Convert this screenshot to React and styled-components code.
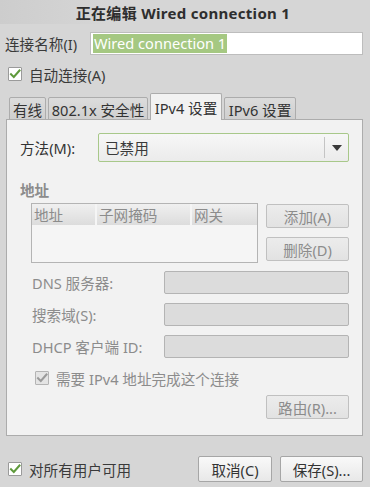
import React from "react";
import styled, { createGlobalStyle } from "styled-components";

const Global = createGlobalStyle`
  html, body { margin: 0; padding: 0; background: #d6d6d6; }
  body {
    font-family: "Noto Sans", "Noto Sans CJK SC", sans-serif;
    font-size: 14.6px;
    color: #3a3a3a;
  }
  * { box-sizing: border-box; }
`;

const Window = styled.div`
  width: 370px;
  height: 487px;
  background: #d6d6d6;
  display: flex;
  flex-direction: column;
  overflow: hidden;
`;

const TitleBar = styled.div`
  height: 24px;
  display: flex;
  align-items: center;
  justify-content: center;
  font-weight: bold;
  font-size: 15px;
  letter-spacing: 0.3px;
  color: #2e2e2e;
  padding-right: 4px;
  background: linear-gradient(to right, #cdcdcd 0%, #d6d6d6 30%, #d6d6d6 100%);
`;

const Content = styled.div`
  padding: 0 7px 0 6px;
  display: flex;
  flex-direction: column;
`;

const NameRow = styled.div`
  display: flex;
  align-items: center;
  margin-top: 8px;
  height: 23px;
`;

const NameLabel = styled.span`
  width: 85px;
  margin-left: -1px;
  white-space: nowrap;
`;

const NameInput = styled.div`
  flex: 1;
  height: 23px;
  background: #ffffff;
  border: 1px solid #bdbdbd;
  display: flex;
  align-items: center;
  padding-left: 2px;
`;

const Selected = styled.span`
  background: #a5c882;
  color: #ffffff;
  line-height: 19px;
  padding: 0 1px;
`;

const CheckRow = styled.label`
  display: flex;
  align-items: center;
  gap: 7px;
  height: 20px;
  white-space: nowrap;
  margin-top: ${(p) => p.$top || 0}px;
  margin-left: ${(p) => p.$left || 0}px;
  color: ${(p) => (p.$disabled ? "#8c8c8c" : "#3a3a3a")};
`;

const Box = styled.span`
  width: 14px;
  height: 14px;
  display: inline-flex;
  align-items: center;
  justify-content: center;
  background: ${(p) => (p.$disabled ? "#e4e4e4" : "#ffffff")};
  border: 1px solid ${(p) => (p.$disabled ? "#b4b4b4" : "#9a9a9a")};
  border-radius: 1px;
`;

const Check = ({ disabled }) => (
  <Box $disabled={disabled}>
    <svg width="12" height="12" viewBox="0 0 12 12">
      <path
        d="M2 6.2 L4.8 9 L10.5 2.5"
        fill="none"
        stroke={disabled ? "#9a9a9a" : "#5f9a3c"}
        strokeWidth="2"
        strokeLinecap="square"
      />
    </svg>
  </Box>
);

const TabStrip = styled.div`
  display: flex;
  align-items: flex-end;
  gap: 2px;
  margin-top: 9px;
  padding-left: 3px;
  height: 27px;
  position: relative;
  z-index: 1;
  margin-bottom: -1px;
`;

const Tab = styled.div`
  height: ${(p) => (p.$active ? 27 : 23)}px;
  width: ${(p) => p.$w}px;
  display: flex;
  align-items: center;
  justify-content: center;
  border: 1px solid #acacac;
  border-bottom: ${(p) => (p.$active ? "none" : "1px solid #acacac")};
  border-radius: 2px 2px 0 0;
  background: ${(p) =>
    p.$active ? "#f2f2f2" : "linear-gradient(#dcdcdc, #cfcfcf)"};
  color: #333;
  white-space: nowrap;
  padding-top: ${(p) => (p.$active ? 0 : 1)}px;
`;

const Panel = styled.div`
  height: 317px;
  background: #f2f2f2;
  border: 1px solid #acacac;
  padding: 13px 13px 0 13px;
  display: flex;
  flex-direction: column;
`;

const MethodRow = styled.div`
  display: flex;
  align-items: center;
  height: 29px;
`;

const MethodLabel = styled.span`
  width: 78px;
  color: #333;
`;

const Combo = styled.div`
  flex: 1;
  height: 29px;
  border: 1px solid #a8c88a;
  border-radius: 2px;
  background: linear-gradient(#f7f7f7, #ebebeb);
  display: flex;
  align-items: center;
  padding-left: 6px;
`;

const ComboText = styled.span`
  flex: 1;
`;

const ComboSep = styled.span`
  width: 1px;
  height: 21px;
  background: #c4c4c4;
  margin-right: 7px;
`;

const Arrow = styled.span`
  width: 0;
  height: 0;
  border-left: 5px solid transparent;
  border-right: 5px solid transparent;
  border-top: 6px solid #3a3a3a;
  margin-right: 6px;
`;

const SectionTitle = styled.div`
  font-weight: bold;
  color: #8c8c8c;
  margin-top: 19px;
  height: 18px;
  line-height: 18px;
`;

const AddrArea = styled.div`
  display: flex;
  gap: 8px;
  margin-top: 4px;
  margin-left: 11px;
`;

const Table = styled.div`
  width: 229px;
  height: 60px;
  border: 1px solid #b4b4b4;
  background: #f5f5f5;
`;

const THead = styled.div`
  display: grid;
  grid-template-columns: 65px 95px 1fr;
  height: 21px;
`;

const TH = styled.div`
  background: linear-gradient(#f0f0f0, #dcdcdc);
  border-right: 2px solid #f5f5f5;
  color: #8c8c8c;
  display: flex;
  align-items: center;
  padding-left: 2px;
  &:last-child { border-right: none; }
`;

const SideButtons = styled.div`
  display: flex;
  flex-direction: column;
  gap: 9px;
  padding-top: 1px;
`;

const Button = styled.div`
  width: ${(p) => p.$w || 83}px;
  height: ${(p) => p.$h || 24}px;
  display: flex;
  align-items: center;
  justify-content: center;
  white-space: nowrap;
  border: 1px solid ${(p) => (p.$disabled ? "#c0c0c0" : "#a6a6a6")};
  border-radius: 2px;
  background: ${(p) =>
    p.$disabled
      ? "linear-gradient(#ececec, #e2e2e2)"
      : "linear-gradient(#f9f9f9, #e8e8e8)"};
  color: ${(p) => (p.$disabled ? "#8c8c8c" : "#333")};
`;

const FieldRow = styled.div`
  display: flex;
  align-items: center;
  height: 23px;
  margin-top: ${(p) => p.$top}px;
  margin-left: 12px;
`;

const FieldLabel = styled.span`
  width: 132px;
  color: #8c8c8c;
  white-space: nowrap;
`;

const DisabledEntry = styled.div`
  flex: 1;
  height: 23px;
  background: #dcdcdc;
  border: 1px solid #b4b4b4;
  border-radius: 2px;
`;

const RightRow = styled.div`
  display: flex;
  justify-content: flex-end;
  margin-top: ${(p) => p.$top}px;
`;

const Footer = styled.div`
  display: flex;
  align-items: center;
  margin-top: 20px;
  padding-left: 2px;
`;

const Spacer = styled.div`
  flex: 1;
`;

const FooterButtons = styled.div`
  display: flex;
  gap: 8px;
`;

export default function App() {
  return (
    <>
      <Global />
      <Window>
        <TitleBar>正在编辑 Wired connection 1</TitleBar>
        <Content>
          <NameRow>
            <NameLabel>连接名称(I)</NameLabel>
            <NameInput>
              <Selected>Wired connection 1</Selected>
            </NameInput>
          </NameRow>
          <CheckRow $top={9} $left={2}>
            <Check />
            <span>自动连接(A)</span>
          </CheckRow>
          <TabStrip>
            <Tab $w={37}>有线</Tab>
            <Tab $w={100}>802.1x 安全性</Tab>
            <Tab $w={72} $active>IPv4 设置</Tab>
            <Tab $w={72}>IPv6 设置</Tab>
          </TabStrip>
          <Panel>
            <MethodRow>
              <MethodLabel>方法(M):</MethodLabel>
              <Combo>
                <ComboText>已禁用</ComboText>
                <ComboSep />
                <Arrow />
              </Combo>
            </MethodRow>
            <SectionTitle>地址</SectionTitle>
            <AddrArea>
              <Table>
                <THead>
                  <TH>地址</TH>
                  <TH>子网掩码</TH>
                  <TH>网关</TH>
                </THead>
              </Table>
              <SideButtons>
                <Button $disabled>添加(A)</Button>
                <Button $disabled>删除(D)</Button>
              </SideButtons>
            </AddrArea>
            <FieldRow $top={8}>
              <FieldLabel>DNS 服务器:</FieldLabel>
              <DisabledEntry />
            </FieldRow>
            <FieldRow $top={9}>
              <FieldLabel>搜索域(S):</FieldLabel>
              <DisabledEntry />
            </FieldRow>
            <FieldRow $top={9}>
              <FieldLabel>DHCP 客户端 ID:</FieldLabel>
              <DisabledEntry />
            </FieldRow>
            <CheckRow $top={10} $left={15} $disabled>
              <Check disabled />
              <span>需要 IPv4 地址完成这个连接</span>
            </CheckRow>
            <RightRow $top={7}>
              <Button $disabled>路由(R)...</Button>
            </RightRow>
          </Panel>
          <Footer>
            <CheckRow>
              <Check />
              <span>对所有用户可用</span>
            </CheckRow>
            <Spacer />
            <FooterButtons>
              <Button $w={74} $h={26}>取消(C)</Button>
              <Button $w={83} $h={26}>保存(S)...</Button>
            </FooterButtons>
          </Footer>
        </Content>
      </Window>
    </>
  );
}
